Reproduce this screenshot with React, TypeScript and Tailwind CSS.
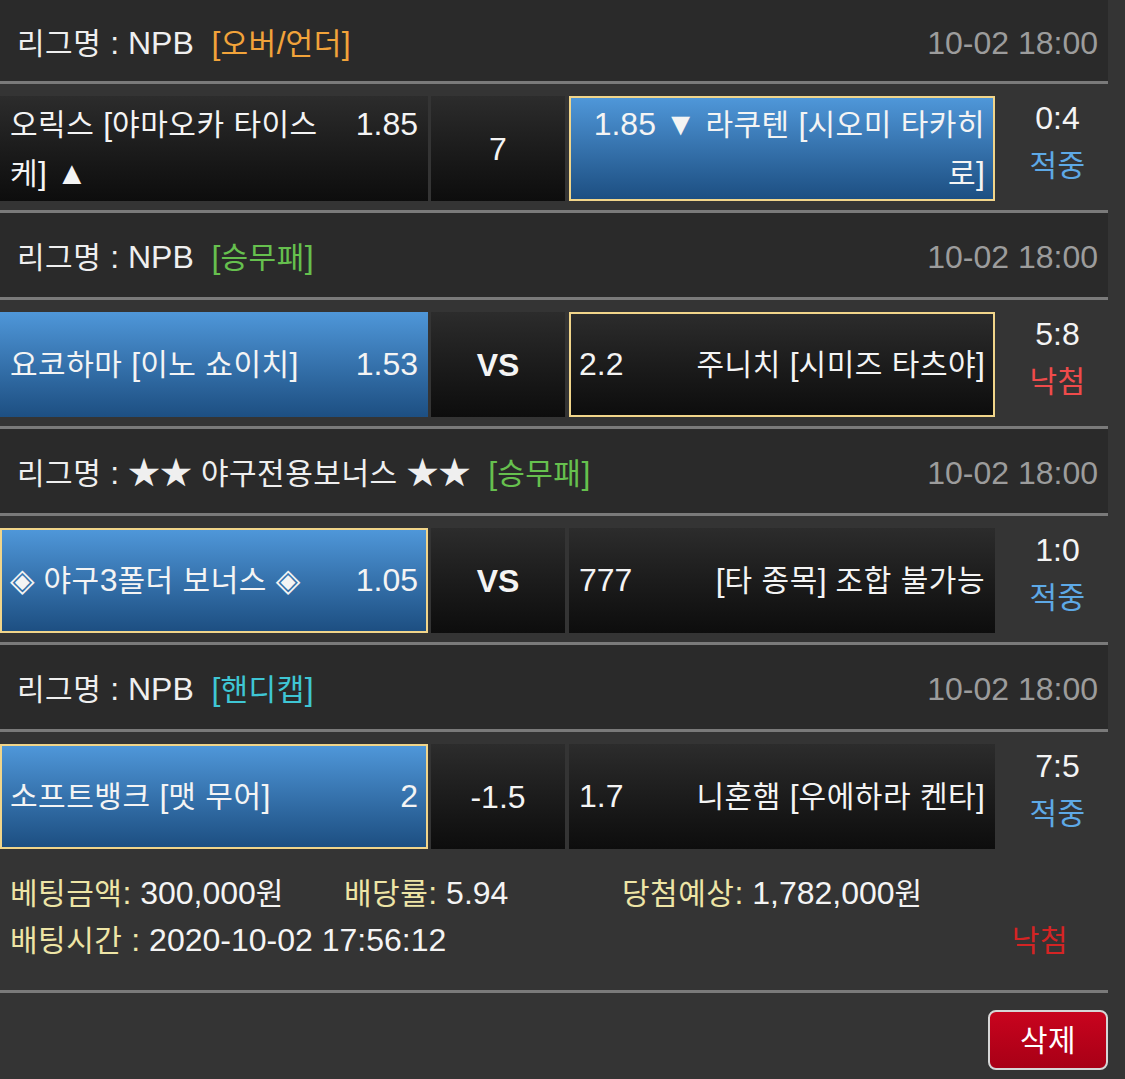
import React from "react";

const HANGUL = /([\uAC00-\uD7A3\u3131-\u318E]+)/;
const IS_HANGUL = /^[\uAC00-\uD7A3\u3131-\u318E]+$/;

function T({ s }: { s: string }) {
  return (
    <>
      {s.split(HANGUL).map((p, i) =>
        IS_HANGUL.test(p) ? (
          <span key={i} className="text-[30px] tracking-[0.5px]">
            {p}
          </span>
        ) : (
          <React.Fragment key={i}>{p}</React.Fragment>
        )
      )}
    </>
  );
}

type CellKind = "dark" | "blue" | "blueSel" | "darkSel";

function cellClass(kind: CellKind) {
  const base = "h-full flex items-center text-[#f4f4f4] leading-[48px]";
  if (kind === "dark") return base + " bg-gradient-to-b from-[#2c2c2c] to-[#0d0d0d] px-[10px]";
  if (kind === "darkSel")
    return base + " bg-gradient-to-b from-[#2c2c2c] to-[#0d0d0d] border-2 border-[#f1d58a] px-[8px]";
  if (kind === "blue") return base + " bg-gradient-to-b from-[#4f97d9] to-[#1d4f82] px-[10px]";
  return base + " bg-gradient-to-b from-[#4f97d9] to-[#1d4f82] border-2 border-[#f1d58a] px-[8px]";
}

function Header({ label, tag, tagClass, first }: { label: string; tag: string; tagClass: string; first?: boolean }) {
  return (
    <>
      <div
        className={
          (first ? "h-[81px]" : "h-[84px]") +
          " bg-[#2a2a2a] flex items-center justify-between pl-[17px] pr-[10px] pt-[4px]"
        }
      >
        <div className="text-[#efefef] whitespace-pre">
          <T s={label} />
          {"  "}
          <span className={tagClass}>
            <T s={tag} />
          </span>
        </div>
        <div className="text-[#9c9c9c]">10-02 18:00</div>
      </div>
      <div className="h-[3px] bg-[#7a7a7a]" />
    </>
  );
}

function Result({ score, res, resClass }: { score: string; res: string; resClass: string }) {
  return (
    <div className="w-[113px] h-full flex flex-col items-center justify-center pl-[12px] pb-[14px] leading-[47px]">
      <div className="text-[#f4f4f4]">{score}</div>
      <div className={resClass}>
        <T s={res} />
      </div>
    </div>
  );
}

function Match({
  left,
  leftKind,
  leftOdds,
  center,
  centerBold,
  right,
  rightKind,
  rightOdds,
  score,
  res,
  resClass,
  leftTwoLine,
  rightTwoLine,
}: {
  left: React.ReactNode;
  leftKind: CellKind;
  leftOdds: string;
  center: string;
  centerBold?: boolean;
  right: React.ReactNode;
  rightKind: CellKind;
  rightOdds?: string;
  score: string;
  res: string;
  resClass: string;
  leftTwoLine?: boolean;
  rightTwoLine?: boolean;
}) {
  return (
    <div className="h-[126px] pt-[12px] pb-[9px] flex">
      <div className={"w-[428px] " + cellClass(leftKind)}>
        <div className="w-full flex items-start justify-between">
          <div className={leftTwoLine ? "" : "whitespace-nowrap"}>{left}</div>
          <div className="shrink-0 pl-[8px]">{leftOdds}</div>
        </div>
      </div>
      <div className="w-[134px] ml-[3px] h-full flex items-center justify-center bg-gradient-to-b from-[#2c2c2c] to-[#0d0d0d] text-[#f4f4f4]">
        <span className={centerBold ? "font-bold" : ""}>{center}</span>
      </div>
      <div className={"w-[426px] ml-[4px] " + cellClass(rightKind)}>
        {rightTwoLine ? (
          <div className="w-full text-right">{right}</div>
        ) : (
          <div className="w-full flex items-start justify-between">
            <div className="shrink-0">{rightOdds}</div>
            <div className="whitespace-nowrap text-right">{right}</div>
          </div>
        )}
      </div>
      <Result score={score} res={res} resClass={resClass} />
    </div>
  );
}

export default function App() {
  const hit = "text-[#5ea9e6]";
  const miss = "text-[#ef4b4b]";
  return (
    <div
      className="w-[1125px] min-h-[1079px] bg-[#343434] text-[32px] leading-normal"
      style={{ fontFamily: '"Liberation Sans", "Noto Sans CJK KR", "DejaVu Sans", sans-serif' }}
    >
      <div className="w-[1108px]">
        <Header first label="리그명 : NPB" tag="[오버/언더]" tagClass="text-[#f2a33a]" />
        <Match
          left={
            <>
              <T s="오릭스 [야마오카 타이스" />
              <br />
              <T s="케] ▲" />
            </>
          }
          leftTwoLine
          leftKind="dark"
          leftOdds="1.85"
          center="7"
          right={
            <>
              <T s="1.85 ▼ 라쿠텐 [시오미 타카히" />
              <br />
              <T s="로]" />
            </>
          }
          rightTwoLine
          rightKind="blueSel"
          score="0:4"
          res="적중"
          resClass={hit}
        />
        <div className="h-[3px] bg-[#7a7a7a]" />

        <Header label="리그명 : NPB" tag="[승무패]" tagClass="text-[#66c04e]" />
        <Match
          left={<T s="요코하마 [이노 쇼이치]" />}
          leftKind="blue"
          leftOdds="1.53"
          center="VS"
          centerBold
          right={<T s="주니치 [시미즈 타츠야]" />}
          rightKind="darkSel"
          rightOdds="2.2"
          score="5:8"
          res="낙첨"
          resClass={miss}
        />
        <div className="h-[3px] bg-[#7a7a7a]" />

        <Header label="리그명 : ★★ 야구전용보너스 ★★" tag="[승무패]" tagClass="text-[#66c04e]" />
        <Match
          left={<T s="◈ 야구3폴더 보너스 ◈" />}
          leftKind="blueSel"
          leftOdds="1.05"
          center="VS"
          centerBold
          right={<T s="[타 종목] 조합 불가능" />}
          rightKind="dark"
          rightOdds="777"
          score="1:0"
          res="적중"
          resClass={hit}
        />
        <div className="h-[3px] bg-[#7a7a7a]" />

        <Header label="리그명 : NPB" tag="[핸디캡]" tagClass="text-[#3fc6d4]" />
        <Match
          left={<T s="소프트뱅크 [맷 무어]" />}
          leftKind="blueSel"
          leftOdds="2"
          center="-1.5"
          right={<T s="니혼햄 [우에하라 켄타]" />}
          rightKind="dark"
          rightOdds="1.7"
          score="7:5"
          res="적중"
          resClass={hit}
        />

        <div className="h-[132px] pt-[12px] pl-[10px] leading-[47px] text-[#f4f4f4]">
          <div className="flex whitespace-nowrap">
            <div className="w-[334px]">
              <span className="text-[#eee5a6]">
                <T s="베팅금액:" />
              </span>{" "}
              300,000<T s="원" />
            </div>
            <div className="w-[278px]">
              <span className="text-[#eee5a6]">
                <T s="배당률:" />
              </span>{" "}
              5.94
            </div>
            <div>
              <span className="text-[#eee5a6]">
                <T s="당첨예상:" />
              </span>{" "}
              1,782,000<T s="원" />
            </div>
          </div>
          <div className="flex whitespace-nowrap">
            <div>
              <span className="text-[#eee5a6]">
                <T s="배팅시간 :" />
              </span>{" "}
              2020-10-02 17:56:12
            </div>
            <div className="ml-auto mr-[40px] text-[#d42424]">
              <T s="낙첨" />
            </div>
          </div>
        </div>
        <div className="h-[3px] bg-[#7a7a7a]" />
        <div className="h-[86px] flex items-start justify-end pt-[17px]">
          <button className="w-[120px] h-[60px] rounded-[8px] border-2 border-[#d6d6d6] bg-gradient-to-b from-[#c8041e] to-[#a80016] text-white flex items-center justify-center">
            <T s="삭제" />
          </button>
        </div>
      </div>
    </div>
  );
}
